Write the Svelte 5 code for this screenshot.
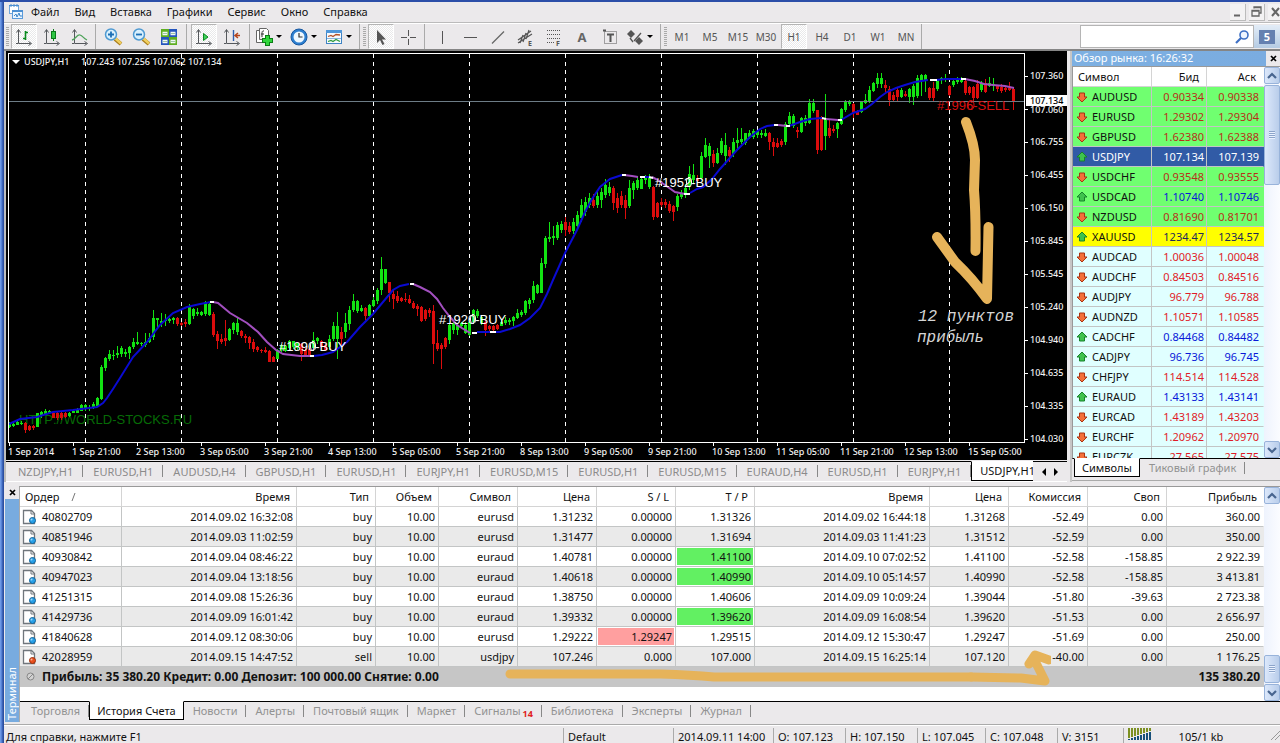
<script>
  const menu = ['Файл', 'Вид', 'Вставка', 'Графики', 'Сервис', 'Окно', 'Справка'];
  const frames = ['M1', 'M5', 'M15', 'M30', 'H1', 'H4', 'D1', 'W1', 'MN'];
  const chartTabs = ['NZDJPY,H1', 'EURUSD,H1', 'AUDUSD,H4', 'GBPUSD,H1', 'EURUSD,H1', 'EURJPY,H1', 'EURUSD,M15', 'EURUSD,H1', 'EURUSD,M15', 'EURAUD,H4', 'EURUSD,H1', 'EURJPY,H1'];
  const prices = ['107.360', '107.060', '106.755', '106.455', '106.150', '105.845', '105.545', '105.240', '104.940', '104.635', '104.335', '104.030'];
  const dates = ['1 Sep 2014', '1 Sep 21:00', '2 Sep 13:00', '3 Sep 05:00', '3 Sep 21:00', '4 Sep 13:00', '5 Sep 05:00', '5 Sep 21:00', '8 Sep 13:00', '9 Sep 05:00', '9 Sep 21:00', '10 Sep 13:00', '11 Sep 05:00', '11 Sep 21:00', '12 Sep 13:00', '15 Sep 05:00'];

  // direction, high, body top, body bottom, low; one bar every four pixels
  const raw = `g422 424 427 428|g421 424 426 427|g421 422 425 425|g421 423 424 425|r422 423 430 433|r425 426 430 431|r425 426 428 430|g413 413 427 427|g411 412 416 418|g409 411 414 415|g410 411 413 413|r411 413 418 418|r412 413 418 420|r411 413 418 420|r412 413 417 418|g412 413 416 417|g410 411 413 413|g408 410 413 413|g404 405 411 411|g404 405 408 411|g405 407 408 411|g402 404 407 409|g397 398 406 407|g365 367 399 400|g357 358 368 371|g350 354 359 361|g350 355 356 360|g346 353 355 358|g346 348 354 357|g349 352 354 357|g346 347 353 359|g338 342 347 349|g332 342 344 345|g342 343 344 346|g333 342 345 347|g333 338 342 343|g310 318 337 340|g318 318 320 327|g313 321 323 327|g314 320 321 326|g318 319 321 323|g317 318 320 324|r317 318 324 326|r322 323 325 326|r319 322 324 327|g304 307 324 325|g308 309 316 319|g308 312 314 316|g311 312 315 316|g301 302 314 316|g302 304 315 316|r312 314 335 337|r331 334 341 349|r334 339 342 344|r320 338 341 346|g328 329 340 341|g322 323 330 334|g318 323 332 335|r330 331 336 338|r334 336 338 343|r336 337 343 349|r339 342 349 352|r346 347 350 352|r349 350 351 353|r347 350 352 353|r350 351 362 362|r356 357 362 362|g349 350 359 359|g344 345 350 352|g345 346 351 352|g340 341 348 350|g341 341 347 349|g342 343 348 350|r343 344 354 361|r348 350 355 356|r347 349 355 355|g332 340 348 348|g337 338 341 344|r340 341 347 348|r344 345 350 351|g335 339 347 350|g322 326 339 341|g312 326 339 359|r327 332 339 345|g313 323 332 338|g306 310 324 330|g294 301 310 312|g300 301 311 313|g305 308 311 312|r307 308 316 320|g304 305 316 317|g297 300 306 307|g288 290 301 304|g257 269 290 295|g269 269 283 284|r282 282 293 302|r290 294 299 309|r291 296 301 303|r297 298 301 302|r293 299 300 302|r295 299 303 304|r301 303 308 309|r304 306 309 316|r306 307 321 322|r309 310 319 321|r308 310 313 317|r305 311 344 364|r330 343 349 351|r343 345 349 369|r337 338 347 349|g324 325 340 344|g322 324 330 334|g323 325 330 335|g322 323 326 328|g322 325 333 334|g320 322 335 336|g309 310 322 323|g309 311 316 318|g315 317 323 325|r320 322 330 336|r325 326 329 331|r325 326 330 331|r324 325 329 330|g320 322 326 326|g317 320 323 325|g318 320 322 325|g316 317 321 326|g309 313 318 319|g310 312 315 317|g300 301 313 315|g298 300 304 309|g281 286 300 303|g284 285 293 294|g258 263 293 293|g236 238 264 268|g222 237 239 242|g226 236 238 245|g222 225 238 240|g221 224 230 233|r217 222 230 236|r222 226 232 234|g218 222 231 234|g211 215 226 230|g199 205 218 222|g197 202 212 216|g193 198 205 208|r194 200 206 208|g190 196 205 208|g188 192 200 208|g179 185 195 198|g182 187 193 196|r186 188 203 210|r193 198 208 213|r191 196 205 208|r195 200 208 219|g180 188 206 208|g181 183 190 199|g176 180 188 190|g176 179 189 189|g175 177 180 184|g174 178 187 189|r186 187 217 220|r202 203 217 218|r198 202 205 207|r199 202 205 208|r201 204 211 213|r205 206 212 221|g194 196 207 211|g190 193 197 199|g184 188 193 198|g166 174 186 190|g164 175 180 183|r175 178 181 183|g152 156 178 180|g138 145 157 158|g143 146 156 168|r150 154 163 167|g148 153 163 164|g138 141 153 155|g133 145 156 165|r147 150 156 162|g138 142 154 157|g128 140 143 150|g128 139 142 144|g133 133 143 145|g130 133 137 139|g129 131 137 139|g130 131 135 138|g130 133 135 138|g129 133 136 137|r132 133 142 150|r138 142 147 156|r138 143 147 148|r139 141 145 147|g122 124 142 145|g112 116 124 127|g114 116 126 128|r127 130 132 138|g117 118 132 133|g115 118 123 126|g99 103 123 124|g99 103 111 113|r110 110 150 154|r116 117 150 151|g94 118 136 150|r120 128 136 138|r125 129 131 133|g122 123 129 138|g108 109 124 125|g100 102 110 112|g100 101 104 106|r103 104 113 118|r110 112 115 115|g101 102 112 113|g94 100 103 104|g86 90 102 103|g82 83 91 92|g73 78 84 88|g73 78 84 88|r80 85 88 92|r86 89 100 106|r92 95 100 102|r88 90 97 101|g88 90 97 98|r91 94 96 97|g88 89 97 103|g84 86 97 105|g75 78 96 98|g74 75 81 96|g74 75 80 92|r87 88 98 100|r82 88 98 101|g79 80 89 91|g77 78 80 84|g74 78 80 82|r85 86 95 96|g79 81 85 87|g77 79 82 84|g77 79 82 83|r79 81 93 95|r86 87 93 95|r86 87 98 102|r80 84 98 99|g81 83 90 92|r79 83 92 93|g77 83 86 87|g78 84 86 91|r85 86 89 92|r84 87 91 93|r86 88 90 92|r82 88 90 91|r87 89 101 110`;
  const bars = raw.split('|').map((s, i) => {
    const [hi, top, bottom, lo] = s.slice(1).split(' ').map(Number);
    return { x: 9 + i * 4, up: s[0] === 'g', hi, top, bottom, lo };
  });

  const blue = '#0a0ad2', violet = '#a24fbf', white = '#fff';
  const average = [
    [blue, '9,424 20,419 37,417 53,412 73,410 97,407 103,403 107,398 113,389 120,378 133,357 147,342 160,325 173,313 187,307 200,304 211,302'],
    [violet, '213,302 218,303 230,313 247,323 258,332 267,342 276,350 283,354 300,356 311,356'],
    [blue, '313,356 322,355 333,352 347,342 360,327 373,314 383,302 393,290 400,286 409,284'],
    [violet, '413,284 420,287 430,292 437,299 443,308 450,317 457,325 470,333'],
    [blue, '477,332 500,332 510,329 520,325 530,318 540,308 547,294 553,280 565,253 577,230 585,212 592,199 600,187 610,179 622,175'],
    [violet, '624,175 632,176 638,177'],
    [blue, '640,177 650,177'],
    [violet, '652,177 658,180 665,185 675,192 685,194'],
    [blue, '690,193 697,189 703,187 712,179 720,169 737,150 750,137 760,129 767,126 775,125'],
    [violet, '778,125 787,126'],
    [blue, '789,126 800,122 810,119 822,118'],
    [violet, '826,119 838,120'],
    [blue, '841,120 853,113 865,109 872,104 880,97 887,92 896,88 905,85 915,82 928,80'],
    [blue, '936,80 946,79 962,79'],
    [violet, '965,79 975,81 984,84 993,85 1005,86 1014,88'],
    [white, '210,302 214,302'], [white, '310,356 314,356'], [white, '410,284 414,284'],
    [white, '472,333 477,333'], [white, '490,332 496,332'], [white, '622,175 626,175'],
    [white, '640,177 645,177'], [white, '649,177 653,178'], [white, '684,194 690,194'],
    [white, '774,125 778,125'], [white, '786,126 790,126'], [white, '822,118 826,119'],
    [white, '838,120 842,120'], [white, '930,80 937,80'], [white, '961,79 966,79']
  ];

  const quotes = [
    ['AUDUSD', '0.90334', '0.90338', 'down', 'lime'],
    ['EURUSD', '1.29302', '1.29304', 'down', 'lime'],
    ['GBPUSD', '1.62380', '1.62388', 'down', 'lime'],
    ['USDJPY', '107.134', '107.139', 'up', 'picked'],
    ['USDCHF', '0.93548', '0.93555', 'down', 'lime'],
    ['USDCAD', '1.10740', '1.10746', 'up', 'lime'],
    ['NZDUSD', '0.81690', '0.81701', 'down', 'lime'],
    ['XAUUSD', '1234.47', '1234.57', 'up', 'gold'],
    ['AUDCAD', '1.00036', '1.00048', 'down', 'cyan'],
    ['AUDCHF', '0.84503', '0.84516', 'down', 'cyan'],
    ['AUDJPY', '96.779', '96.788', 'down', 'cyan'],
    ['AUDNZD', '1.10571', '1.10585', 'down', 'cyan'],
    ['CADCHF', '0.84468', '0.84482', 'up', 'cyan'],
    ['CADJPY', '96.736', '96.745', 'up', 'cyan'],
    ['CHFJPY', '114.514', '114.528', 'down', 'cyan'],
    ['EURAUD', '1.43133', '1.43141', 'up', 'cyan'],
    ['EURCAD', '1.43189', '1.43203', 'down', 'cyan'],
    ['EURCHF', '1.20962', '1.20970', 'down', 'cyan'],
    ['EURCZK', '27.565', '27.575', 'down', 'cyan']
  ];

  const heads = ['Время', 'Тип', 'Объем', 'Символ', 'Цена', 'S / L', 'T / P', 'Время', 'Цена', 'Комиссия', 'Своп', 'Прибыль'];
  const orders = [
    ['40802709', '2014.09.02 16:32:08', 'buy', '10.00', 'eurusd', '1.31232', '0.00000', '1.31326', '2014.09.02 16:44:18', '1.31268', '-52.49', '0.00', '360.00'],
    ['40851946', '2014.09.03 11:02:59', 'buy', '10.00', 'eurusd', '1.31477', '0.00000', '1.31694', '2014.09.03 11:41:23', '1.31512', '-52.59', '0.00', '350.00'],
    ['40930842', '2014.09.04 08:46:22', 'buy', '10.00', 'euraud', '1.40781', '0.00000', '1.41100', '2014.09.10 07:02:52', '1.41100', '-52.58', '-158.85', '2 922.39'],
    ['40947023', '2014.09.04 13:18:56', 'buy', '10.00', 'euraud', '1.40618', '0.00000', '1.40990', '2014.09.10 05:14:57', '1.40990', '-52.58', '-158.85', '3 413.81'],
    ['41251315', '2014.09.08 15:26:36', 'buy', '10.00', 'euraud', '1.38750', '0.00000', '1.40606', '2014.09.09 10:09:24', '1.39044', '-51.80', '-39.63', '2 723.38'],
    ['41429736', '2014.09.09 16:01:42', 'buy', '10.00', 'euraud', '1.39332', '0.00000', '1.39620', '2014.09.09 16:08:54', '1.39620', '-51.53', '0.00', '2 656.97'],
    ['41840628', '2014.09.12 08:30:06', 'buy', '10.00', 'eurusd', '1.29222', '1.29247', '1.29515', '2014.09.12 15:30:47', '1.29247', '-51.69', '0.00', '250.00'],
    ['42028959', '2014.09.15 14:47:52', 'sell', '10.00', 'usdjpy', '107.246', '0.000', '107.000', '2014.09.15 16:25:14', '107.120', '-40.00', '0.00', '1 176.25']
  ];
  const closedBy = (row, col) => (col === 6 || col === 7) && row[col] === row[9] ? (col === 6 ? 'stop' : 'take') : '';

  const termTabs = ['Торговля', 'История Счета', 'Новости', 'Алерты', 'Почтовый ящик', 'Маркет', 'Сигналы', 'Библиотека', 'Эксперты', 'Журнал'];
</script>

{#snippet axes()}
  <path d="M5.500 4v13.500h12M3.500 6.500l2-3 2 3M15.500 15.500l3 2-3 2M3 17.500h2" fill="none" stroke="#55585c" />
{/snippet}

{#snippet chevron(down)}
  <svg width="14" height="14" viewBox="0 0 14 14" aria-hidden="true">
    <path d={down ? 'M3 5l4 4 4-4' : 'M3 9l4-4 4 4'} fill="none" stroke="#48658f" stroke-width="2.200" />
  </svg>
{/snippet}

{#snippet drop()}<i class="drop"></i>{/snippet}

<div class="window">
  <header class="menubar">
    <svg class="logo" width="16" height="16" viewBox="0 0 16 16" aria-hidden="true">
      <rect x="1.500" y="1.500" width="9" height="8" fill="#fff" stroke="#6fa5dc" />
      <path d="M1 1.500h10M3 0v3M6 0v3M9 0v3" stroke="#4c8fd2" />
      <rect x="4.500" y="6.500" width="10" height="8" fill="#eaf5ff" stroke="#5b9bdb" />
      <path d="M4 7h11" stroke="#4c8fd2" stroke-width="2" />
      <path d="M6 12l2-2 1 3 2-4 1 3h2" fill="none" stroke="#3d85c9" />
    </svg>
    <nav>
      {#each menu as item}<button>{item}</button>{/each}
    </nav>
    <div class="winbtns">
      <button aria-label="Свернуть"><svg width="15" height="16" viewBox="0 0 15 16"><path d="M4 11.500h6" stroke="#666" stroke-width="2" /></svg></button>
      <button aria-label="Восстановить"><svg width="15" height="16" viewBox="0 0 15 16"><path d="M5 4.500V3h7v6h-2M5 3.500h7M3 6.500h7V12H3zM3 7h7" fill="none" stroke="#666" stroke-width="1.300" /></svg></button>
      <button aria-label="Закрыть"><svg width="15" height="16" viewBox="0 0 15 16"><path d="M4 4l7 8M11 4l-7 8" stroke="#666" stroke-width="2" /></svg></button>
    </div>
  </header>

  <div class="toolbar">
    <i class="grip"></i>
    <button class="tool on" aria-label="Бары"><svg width="22" height="22" viewBox="0 0 22 22">{@render axes()}<path d="M12.500 5v9M10 12.500h2M13 6.500h2" stroke="#0a8a1e" stroke-width="1.600" /></svg></button>
    <button class="tool" aria-label="Свечи"><svg width="22" height="22" viewBox="0 0 22 22">{@render axes()}<path d="M12.500 3v12" stroke="#0a7a1a" /><rect x="10.500" y="5.500" width="4" height="7" fill="#2fc544" stroke="#0a7a1a" /></svg></button>
    <button class="tool" aria-label="Линия"><svg width="22" height="22" viewBox="0 0 22 22">{@render axes()}<path d="M3 14c4-1 5-6 8-5s3 3 7 5" fill="none" stroke="#4fa35a" stroke-width="1.300" /></svg></button>
    <i class="sep"></i>
    {#each ['M5 8h6M8 5v6', 'M5 8h6'] as mark, n}
      <button class="tool" aria-label={n ? 'Уменьшить' : 'Увеличить'}><svg width="22" height="22" viewBox="0 0 22 22"><path d="M13 13l6 5" stroke="#a97d1d" stroke-width="4" /><path d="M13.500 12.500l5.500 5" stroke="#f1cf5f" stroke-width="2.400" /><circle cx="9" cy="8.500" r="5.500" fill="#d9f0fd" stroke="#4f9ad2" stroke-width="1.500" /><path d={mark} transform="translate(1 .5)" stroke="#1c6fb5" stroke-width="1.800" /></svg></button>
    {/each}
    <button class="tool" aria-label="Окна рядом"><svg width="22" height="22" viewBox="0 0 22 22"><rect x="3" y="3" width="8" height="8" fill="#5fae22" /><rect x="11" y="3" width="8" height="8" fill="#2355bd" /><rect x="3" y="11" width="8" height="8" fill="#2355bd" /><rect x="11" y="11" width="8" height="8" fill="#5fae22" /><path d="M4.500 7.500h5M12.500 7.500h5M4.500 15.500h5M12.500 15.500h5" stroke="#f0f8f4" stroke-width="3.400" /><path d="M5 7.500h4M13 7.500h4M5 15.500h4M13 15.500h4" stroke="#9cc4a4" /></svg></button>
    <i class="sep wide"></i>
    <button class="tool on" aria-label="Автопрокрутка"><svg width="22" height="22" viewBox="0 0 22 22">{@render axes()}<path d="M10.500 7.500v7l4.500-3.500z" fill="#3ed05a" stroke="#0a8a1e" /></svg></button>
    <button class="tool" aria-label="Сдвиг графика"><svg width="22" height="22" viewBox="0 0 22 22">{@render axes()}<path d="M12.500 4v11" stroke="#2f5fae" stroke-width="1.400" /><path d="M19 9.500h-4M17 7l-3 2.500 3 2.500" fill="none" stroke="#b5441c" stroke-width="1.500" /></svg></button>
    <i class="sep wide"></i>
    <button class="tool menu" aria-label="Индикаторы"><svg width="22" height="22" viewBox="0 0 22 22"><path d="M6.500 4.500h-3v12h9M6.500 2.500h7l2 2v9h-9z" fill="#fff" stroke="#666" /><path d="M11 5c-2-.5-2 1-2 3v3M8 8h3" fill="none" stroke="#333" /><path d="M14.500 9v11M9 14.500h11" stroke="#0b7d16" stroke-width="5" /><path d="M14.500 10v9M10 14.500h9" stroke="#31d63c" stroke-width="3" /></svg>{@render drop()}</button>
    <button class="tool menu" aria-label="Периоды"><svg width="22" height="22" viewBox="0 0 22 22"><circle cx="11" cy="11" r="8" fill="#2d7fd0" stroke="#1858a0" /><circle cx="11" cy="11" r="5.500" fill="#eef8ff" /><path d="M11 7v4h3.500" fill="none" stroke="#333" stroke-width="1.200" /></svg>{@render drop()}</button>
    <button class="tool menu" aria-label="Шаблоны"><svg width="22" height="22" viewBox="0 0 22 22"><rect x="3.500" y="4.500" width="15" height="13" fill="#f7fbff" stroke="#3f83c4" /><path d="M3 5.500h16" stroke="#4f97da" stroke-width="3" /><path d="M5 10.500l3-1 2 1 3-2 4 .5" fill="none" stroke="#b5532a" stroke-width="1.300" /><path d="M4 12.500h14" stroke="#8ab4dc" /><path d="M5 15.500l3-1 2 1 3-2 4 2" fill="none" stroke="#2f9b3c" stroke-width="1.300" /></svg>{@render drop()}</button>
    <i class="sep"></i>
    <i class="grip"></i>
    <button class="tool on" aria-label="Курсор"><svg width="22" height="22" viewBox="0 0 22 22"><path d="M7 4v13l3-3 2.500 5 2-1-2.500-4.500h4z" fill="#555" /></svg></button>
    <button class="tool" aria-label="Перекрестие"><svg width="22" height="22" viewBox="0 0 22 22"><path d="M10.500 4v6M10.500 13v6M3 11.500h6M12 11.500h6" stroke="#555" /></svg></button>
    <i class="sep"></i>
    <button class="tool" aria-label="Вертикальная линия"><svg width="22" height="22" viewBox="0 0 22 22"><path d="M11.500 5v13" stroke="#555" /></svg></button>
    <button class="tool" aria-label="Горизонтальная линия"><svg width="22" height="22" viewBox="0 0 22 22"><path d="M5 11.500h13" stroke="#555" /></svg></button>
    <button class="tool" aria-label="Трендовая линия"><svg width="22" height="22" viewBox="0 0 22 22"><path d="M5 17.500L17 5.500" stroke="#666" stroke-width="1.200" /></svg></button>
    <button class="tool" aria-label="Канал"><svg width="22" height="22" viewBox="0 0 22 22"><path d="M3 14L16 5M3 17L17 8M5 17l3-8M8 16l3-9M11 13l3-9" stroke="#555" stroke-width="1.200" /><text x="13" y="20">E</text></svg></button>
    <button class="tool" aria-label="Фибоначчи"><svg width="22" height="22" viewBox="0 0 22 22"><path d="M4 4.500h14M4 8.500h14M4 12.500h14M4 16.500h8" stroke="#555" stroke-dasharray="1 1" /><text x="13" y="20">F</text></svg></button>
    <button class="tool letter" aria-label="Текст">A</button>
    <button class="tool" aria-label="Метка"><svg width="22" height="22" viewBox="0 0 22 22"><rect x="5.500" y="5.500" width="12" height="12" fill="none" stroke="#555" stroke-dasharray="1 1" /><path d="M4 4.500h3M8 8.500h7M11.500 8v8" stroke="#555" stroke-width="2" /></svg></button>
    <button class="tool menu" aria-label="Стрелки"><svg width="22" height="22" viewBox="0 0 22 22"><path d="M7 4l4 4-4 4-4-4zM15 11l4 4-4 4-4-4z" fill="#555" /><path d="M10 15l7-8M6 12l3 4" stroke="#555" stroke-width="1.300" /></svg>{@render drop()}</button>
    <i class="sep"></i>
    <i class="grip"></i>
    {#each frames as f}<button class="tool frame" class:on={f === 'H1'}>{f}</button>{/each}
    <i class="sep"></i>
    <div class="search">
      <input type="text" aria-label="Поиск" />
      <svg width="16" height="16" viewBox="0 0 16 16" aria-hidden="true"><circle cx="10" cy="6" r="4" fill="#eef5ff" stroke="#3d6fc4" stroke-width="1.600" /><path d="M7 9l-5 5" stroke="#3d6fc4" stroke-width="2.200" /></svg>
    </div>
    <button class="chat" aria-label="Сообщения"><span>5</span></button>
  </div>

  <main>
    <section class="charts">
      <svg class="chart" viewBox="6 51 1061 409">
        <rect x="6" y="51" width="1061" height="409" fill="#000" />
        <text class="site" x="19" y="424">HTTP://WORLD-STOCKS.RU</text>
        <g shape-rendering="crispEdges">
          {#each Array(10) as _, i}
            <path d={`M${85.5 + i * 96} 54V442`} stroke="#fff" stroke-dasharray="4 4" />
          {/each}
          {#each bars as b}
            <g fill={b.up ? '#12e312' : '#dc0c0c'}>
              <rect x={b.x} y={b.hi} width="1" height={b.lo - b.hi} />
              <rect x={b.x - 1} y={b.top} width="3" height={Math.max(1, b.bottom - b.top)} />
            </g>
          {/each}
          <path d="M9 101.500H1024" stroke="#6d7c86" />
        </g>
        {#each average as [color, points]}
          <polyline {points} fill="none" stroke={color} stroke-width="2" />
        {/each}
        <g class="deal">
          <text x="279" y="351">#1890-BUY</text>
          <text x="439" y="324">#1920-BUY</text>
          <text x="655" y="187">#1952-BUY</text>
          <text class="sell" x="937" y="110">#1996-SELL</text>
        </g>
        <g fill="none" stroke="#fff">
          <ellipse cx="313" cy="346" rx="2.500" ry="4.500" />
          <ellipse cx="473" cy="319" rx="2.500" ry="4.500" />
          <ellipse cx="689" cy="182" rx="2.500" ry="4.500" />
          <ellipse cx="971" cy="105" rx="3" ry="4.500" stroke="#d81010" />
        </g>
        <path d="M8.500 442V53.500H1024.500V442.500H8" fill="none" stroke="#fff" shape-rendering="crispEdges" />
        <path d="M12 60h8l-4 4z" fill="#fff" />
        <g class="scale">
          <text x="24" y="65">USDJPY,H1</text>
          <text x="81" y="65">107.243 107.256 107.062 107.134</text>
          {#each prices as p, i}
            <path d={`M1025 ${76.500 + i * 33}h3`} stroke="#fff" />
            <text x="1030" y={i === 1 ? 113 : 79 + i * 33}>{p}</text>
          {/each}
          {#each dates as d, i}
            <path d={`M${9.500 + i * 64} 443v3`} stroke="#fff" />
            <text x={8 + i * 64} y="455">{d}</text>
          {/each}
          <rect x="1026" y="95" width="41" height="11" fill="#fff" />
          <text class="now" x="1030" y="104">107.134</text>
        </g>
        <g fill="none" stroke="#e6b35a" stroke-width="10" stroke-linecap="round" stroke-linejoin="round">
          <path d="M966 122Q975 145 975 160L974 190Q976 215 975.500 251" />
          <path d="M937 237L955 262Q973 279 987 299L988.500 227" />
        </g>
        <g class="note">
          <text x="918" y="321">12 пунктов</text>
          <text x="917" y="342">прибыль</text>
        </g>
      </svg>
      <div class="charttabs">
        {#each chartTabs as t}<button>{t}</button>{/each}
        <button class="active">USDJPY,H1</button>
        <div class="pager">
          <button aria-label="Назад"><i class="left"></i></button>
          <button aria-label="Вперёд"><i class="right"></i></button>
        </div>
      </div>
    </section>

    <section class="watch">
      <div class="title"><h2>Обзор рынка: 16:26:32</h2><button class="x" aria-label="Закрыть панель"><svg width="7" height="7" viewBox="0 0 7 7"><path d="M1 1l5 5M6 1l-5 5" stroke="#000" stroke-width="1.700" /></svg></button></div>
      <div class="view">
        <table>
          <colgroup><col /><col class="bid" /><col class="ask" /></colgroup>
          <thead><tr><th>Символ</th><th>Бид</th><th>Аск</th></tr></thead>
          <tbody>
            {#each quotes as [name, bid, ask, dir, tone]}
              <tr class="{tone} {dir}">
                <td>
                  <svg width="12" height="12" viewBox="0 0 12 12" aria-hidden="true">
                    {#if dir === 'up'}
                      <path d="M6 1L11 6H8.500v4h-5V6H1z" fill="#3fc24e" stroke="#16832a" stroke-linejoin="round" />
                    {:else}
                      <path d="M6 11L1 6h2.500V2h5v4H11z" fill="#f4713a" stroke="#a93412" stroke-linejoin="round" />
                    {/if}
                  </svg>{name}
                </td>
                <td>{bid}</td><td>{ask}</td>
              </tr>
            {/each}
          </tbody>
        </table>
        <div class="scroll">
          <button aria-label="Вверх">{@render chevron(false)}</button>
          <div class="thumb tall"></div>
          <span class="track"></span>
          <button aria-label="Вниз">{@render chevron(true)}</button>
        </div>
      </div>
      <div class="sheets"><button class="active">Символы</button><button>Тиковый график</button></div>
    </section>
  </main>

  <section class="terminal">
    <div class="side">
      <button class="x" aria-label="Закрыть терминал"><svg width="7" height="7" viewBox="0 0 7 7"><path d="M1 1l5 5M6 1l-5 5" stroke="#000" stroke-width="1.700" /></svg></button>
      <h2>Терминал</h2>
    </div>
    <div class="pane">
      <div class="history">
        <table>
          <colgroup>
            <col class="c102" /><col class="c175" /><col class="c79" /><col class="c63" /><col class="c79" /><col class="c79" /><col class="c79" /><col class="c79" /><col class="c175" /><col class="c79" /><col class="c79" /><col class="c79" /><col />
          </colgroup>
          <thead>
            <tr><th>Ордер<svg width="6" height="8" viewBox="0 0 6 8" aria-hidden="true"><path d="M1 8L4 0" stroke="#777" /></svg></th>{#each heads as h}<th>{h}</th>{/each}</tr>
          </thead>
          <tbody>
            {#each orders as row}
              <tr>
                {#each row as cell, c}
                  <td class={closedBy(row, c)}>
                    {#if c === 0}
                      <svg width="15" height="16" viewBox="0 0 15 16" aria-hidden="true">
                        <path d="M1.500 1.500h8l3 3V14.500h-11z" fill="#fff" stroke="#70767c" stroke-width="1.300" />
                        <path d="M9 1v4h4" fill="none" stroke="#70767c" />
                        <circle cx="10.500" cy="11.500" r="3" fill={row[2] === 'sell' ? '#ea4f1c' : '#27a0e8'} stroke={row[2] === 'sell' ? '#9b300c' : '#136399'} />
                        <circle cx="9.500" cy="10.500" r="1" fill="#fff" opacity=".6" />
                      </svg>
                    {/if}{cell}
                  </td>
                {/each}
              </tr>
            {/each}
          </tbody>
          <tfoot>
            <tr>
              <td colspan="12">
                <svg width="9" height="9" viewBox="0 0 9 9" aria-hidden="true"><circle cx="4.500" cy="4.500" r="3.500" fill="#d2d2d2" stroke="#888" /><path d="M2 7l5-5" stroke="#888" /></svg><span>Прибыль: 35 380.20</span> <span>Кредит: 0.00</span> <span>Депозит: 100 000.00</span> <span>Снятие: 0.00</span>
              </td>
              <td>135 380.20</td>
            </tr>
          </tfoot>
        </table>
        <div class="scroll">
          <button aria-label="Вверх">{@render chevron(false)}</button>
          <span class="track"></span>
          <div class="thumb"></div>
          <button aria-label="Вниз">{@render chevron(true)}</button>
        </div>
        <svg class="marker" width="550" height="44" viewBox="0 0 550 44" aria-hidden="true">
          <g fill="none" stroke="#e6b35a" stroke-linecap="round" stroke-linejoin="round">
            <path d="M9 28L160 28Q190 29 213 31L470 31" stroke-width="9" />
            <path d="M470 31L520 32L544 35L533 13L528 18L534 9L548 14" stroke-width="9" />
          </g>
        </svg>
      </div>
      <div class="sheets">
        {#each termTabs as t}
          <button class:active={t === 'История Счета'}>{t}{#if t === 'Сигналы'}<b>14</b>{/if}</button>
        {/each}
      </div>
    </div>
  </section>

  <footer>
    <span>Для справки, нажмите F1</span><span>Default</span><span>2014.09.11 14:00</span><span>O: 107.123</span><span>H: 107.150</span><span>L: 107.045</span><span>C: 107.048</span><span>V: 3151</span>
    <span class="link">
      <svg width="24" height="12" viewBox="0 0 24 12" aria-hidden="true">
        {#each Array(8) as _, i}
          <rect x={i * 3} y="0" width="2" height={10 - i} fill="#7c9022" />
          <rect x={i * 3} y={11 - i} width="2" height={i + 1} fill="#17507a" />
        {/each}
      </svg>105/1 kb
      <svg class="size" width="10" height="12" viewBox="0 0 10 12" aria-hidden="true"><path d="M1 12L10 3M5 12l5-5" stroke="#999" /></svg>
    </span>
  </footer>
</div>

<style>
  :global(body) { margin: 0; background: #ebe9eb; }
  * { box-sizing: border-box; }
  .window {
    font: 11px/20px 'Noto Sans', Tahoma, sans-serif;
    color: #111;
    background: linear-gradient(90deg, #7aa5ee, #4a76cc 2px, #2c4fa0 3px, #2c4fa0) 0 0 / 4px 100% no-repeat #ebe9eb;
    border-top: 2px solid #2b4ea8;
    border-bottom: 1px solid #2b4ea8;
    padding-left: 4px;
    min-height: 100vh;
    overflow: hidden;
    display: flex;
    flex-direction: column;
  }
  button { font: inherit; color: inherit; background: none; border: 0; padding: 0; margin: 0; white-space: nowrap; }
  h2 { font: inherit; margin: 0; }
  svg { display: block; flex: none; }

  .menubar { display: flex; align-items: center; height: 21px; border-bottom: 1px solid #bbb; }
  .logo { margin: 0 0 0 4px; }
  nav { display: flex; flex: 1; }
  nav button { padding: 0 8px 0 7px; }
  .winbtns { display: flex; gap: 3px; }
  .winbtns button { border-right: 1px solid #bbb; border-bottom: 1px solid #bbb; background: #f3f2f3; }
  .winbtns button:last-child { margin-right: -4px; }

  .toolbar { display: flex; align-items: center; height: 28px; border-top: 1px solid #fff; border-bottom: 2px solid #858585; padding-left: 2px; }
  .grip { width: 3px; height: 20px; margin: 0 1px 0 0; flex: none; background: repeating-linear-gradient(#aaa 0 1px, #ebe9eb 1px 2px); }
  .sep { width: 4px; height: 25px; flex: none; border-left: 1px solid #aaa; margin-left: 1px; }
  .sep.wide { margin-left: 3px; }
  .tool { width: 28px; height: 25px; flex: none; display: flex; align-items: center; justify-content: center; }
  .tool.on { background: repeating-conic-gradient(#fff 0 25%, #e9e9ea 0 50%) 0 0 / 2px 2px; border: 1px solid #b4b4b4; border-right-color: #fff; border-bottom-color: #fff; width: 26px; margin: 0 1px; }
  .tool.menu { width: 35px; justify-content: flex-start; gap: 1px; }
  .tool text { font: bold 7px 'Noto Sans', sans-serif; fill: #555; }
  .frame { font-size: 10px; color: #555; }
  .letter { font-weight: bold; font-size: 13px; color: #666; }
  .drop { border: 3px solid transparent; border-top-color: #000; border-bottom: 0; }
  .search { display: flex; align-items: center; width: 174px; height: 23px; margin-left: auto; background: #fff; border: 1px solid #b5b5b5; padding-right: 3px; flex: none; }
  .search input { flex: 1; min-width: 0; border: 0; outline: 0; background: none; font: inherit; }
  .chat { width: 26px; height: 23px; background: linear-gradient(#e3edf7, #b5cbe3); display: flex; align-items: center; justify-content: center; }
  .chat span { background: #6580b0; color: #fff; font-weight: bold; line-height: 14px; width: 16px; }

  main { display: grid; grid-template-columns: minmax(0, 1fr) 210px; gap: 3px; border-left: 2px solid #bdbdbd; }
  .charts { min-width: 0; }
  .chart { width: 100%; height: auto; }
  .chart text { white-space: pre; }
  .scale text { font: 500 9px 'Noto Sans', sans-serif; fill: #f2f2f2; }
  .scale .now { fill: #000; }
  .site { font: 13px 'Liberation Sans', Arial, sans-serif; fill: #066b06; }
  .deal text { font: 13px 'Liberation Sans', Arial, sans-serif; fill: #fff; }
  .deal .sell { fill: #d81010; }
  .note text { font: italic 16px 'Liberation Mono', 'Courier New', monospace; fill: #d4d4d4; }

  .charttabs { display: flex; height: 22px; position: relative; overflow: hidden; border-bottom: 1px solid #fff; }
  .charttabs::before { content: ''; width: 2px; flex: none; margin-top: 1px; border-top: 1px solid #000; }
  .charttabs > button { position: relative; flex: none; padding: 0 10px; color: #8b8b8b; border-top: 1px solid #000; margin-top: 1px; line-height: 18px; }
  .charttabs > button:not(.active)::after, .sheets button:not(.active)::after { content: ''; position: absolute; right: 0; top: 3px; height: 12px; border-right: 1px solid #888; }
  .charttabs > .active, .sheets .active { background: #fff; color: #111; border: 1px solid #000; border-top-color: #fff; }
  .charttabs > .active { padding: 0 8px; }
  .pager { position: absolute; right: 0; top: 1px; bottom: 0; width: 34px; background: #ebe9eb; border-top: 1px solid #000; display: flex; align-items: center; justify-content: space-evenly; }
  .pager i { display: block; border: 4px solid transparent; border-width: 4px 0; }
  .pager .left { border-right: 4px solid #000; }
  .pager .right { border-left: 4px solid #000; }

  .watch { display: flex; flex-direction: column; border-left: 2px solid #c6c6c6; }
  .title { display: flex; height: 15px; line-height: 14px; }
  .title h2 { flex: 1; color: #fff; padding-left: 2px; background: linear-gradient(90deg, #7db0e2, #7aace0); }
  .x { width: 14px; display: flex; align-items: center; justify-content: center; }
  .view { flex: 1; contain: size; overflow: hidden; display: flex; align-items: flex-start; background: #fff; border: 1px solid #999; border-right: 0; border-bottom: 1px solid #000; }
  .watch table { flex: 1; }
  .watch .scroll { align-self: stretch; }
  table { border-collapse: separate; border-spacing: 0; table-layout: fixed; width: 100%; }
  th, td { height: 20px; padding: 0; line-height: 18px; text-align: right; border-bottom: 1px solid #c3c5c5; border-right: 1px solid #c3c5c5; font-weight: normal; white-space: nowrap; overflow: hidden; }
  th { background: #fff; border-color: #d4d4d4; }
  th:last-child, td:last-child { border-right-color: transparent; }
  td:first-child svg { display: inline-block; vertical-align: middle; }
  .bid { width: 55px; }
  .ask { width: 57px; }
  .watch th { padding: 0 7px 0 5px; }
  .watch th:first-child, .watch td:first-child { text-align: left; }
  .watch td { padding-right: 2px; }
  .watch td:first-child { padding-left: 3px; }
  .watch td:first-child svg { margin: -2px 4px 0 0; }
  .watch td:last-child { padding-right: 4px; }
  .lime { background: #70ff70; }
  .gold { background: #ff0; }
  .cyan { background: #e0ffff; }
  .picked { background: #315ba6; color: #fff; }
  .down td:not(:first-child) { color: #e01c28; }
  .down.lime td:not(:first-child) { color: #b83018; }
  .up.cyan td:not(:first-child), .up.lime td:not(:first-child) { color: #0818d8; }
  .up.gold td:not(:first-child) { color: #222a5a; }

  .scroll { width: 16px; flex: none; display: flex; flex-direction: column; gap: 1px; background: linear-gradient(90deg, #eef3fd, #fbfcff); }
  .scroll button, .thumb { border: 1px solid #98b3da; border-radius: 2px; background: linear-gradient(90deg, #dce8fb, #b9cdea); width: 16px; height: 17px; flex: none; display: flex; align-items: center; justify-content: center; }
  .thumb { height: 28px; }
  .thumb::before { content: ''; width: 6px; height: 8px; background: repeating-linear-gradient(#8da5ca 0 1px, #eaf2ff 1px 2px); }
  .thumb.tall { height: 100px; }
  .track { flex: 1; }

  .sheets { display: flex; height: 20px; padding-left: 2px; }
  .sheets button { position: relative; padding: 0 9px; color: #929292; line-height: 18px; height: 18px; }
  .sheets .active { padding: 0 7px; margin-top: -1px; height: 19px; }
  .watch .sheets { height: 22px; border-bottom: 1px solid #aaa; margin-bottom: 1px; }
  .sheets b { color: #e02020; font-size: 9px; margin-left: 2px; vertical-align: -2px; line-height: 9px; }

  .terminal { display: flex; margin-top: 4px; }
  .side { width: 15px; padding-left: 1px; display: flex; flex-direction: column; }
  .side .x { height: 13px; }
  .side h2 { flex: 1; writing-mode: vertical-rl; transform: rotate(180deg); background: #78abdf; color: #fff; line-height: 14px; padding-top: 2px; }
  .pane { flex: 1; min-width: 0; border-left: 1px solid #aaa; border-top: 1px solid #999; }
  .history { position: relative; display: flex; background: #fff; border-bottom: 1px solid #000; padding-bottom: 14px; }
  .history table { flex: 1; }
  .history .scroll { margin-bottom: -14px; }
  .marker { position: absolute; left: 481px; top: 159px; }
  .c102 { width: 102px; }
  .c175 { width: 175px; }
  .c79 { width: 79px; }
  .c63 { width: 63px; }
  .terminal th { padding-right: 6px; }
  .terminal th:first-child { text-align: left; padding-left: 5px; }
  .terminal th svg { display: inline-block; margin-left: 12px; }
  .terminal td { padding-right: 3px; }
  .terminal td:first-child { text-align: left; padding-left: 2px; }
  .terminal td:first-child svg { margin: -2px 5px 0 0; }
  .terminal tbody tr:nth-child(even) { background: #eaeaea; }
  .terminal .take { background: #62f062; box-shadow: inset 0 0 0 1px #fff; }
  .terminal .stop { background: #ff9f9f; box-shadow: inset 0 0 0 1px #fff; }
  .terminal tfoot td { background: #c6c6c6; border-color: #c6c6c6; font-weight: bold; font-size: 12px; }
  .terminal tfoot td:first-child { padding-left: 6px; }
  .terminal tfoot td:first-child svg { margin-right: 7px; }

  footer { display: flex; flex: 1; margin-top: 2px; border-top: 1px solid #aaa; box-shadow: inset 0 1px #fff; height: 18px; overflow: hidden; padding-top: 3px; }
  footer span { flex: none; width: 72px; padding-left: 4px; border-left: 1px solid #aaa; white-space: nowrap; line-height: 18px; height: 18px; }
  footer span:first-child { flex: 1; border: 0; padding-left: 2px; }
  footer span:nth-child(2) { width: 110px; }
  footer span:nth-child(3) { width: 100px; }
  footer span:nth-child(6) { width: 68px; }
  footer span:nth-child(8) { width: 66px; }
  footer .link { width: 157px; display: flex; justify-content: space-between; }
  .link .size { margin-left: 20px; }
</style>
